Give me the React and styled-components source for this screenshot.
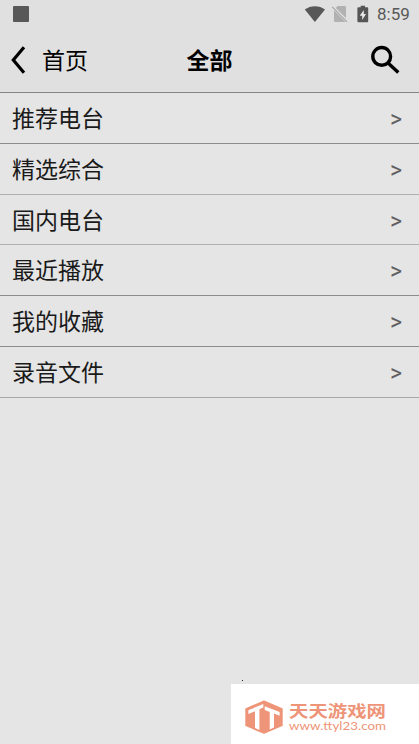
import React from "react";
import styled, { createGlobalStyle } from "styled-components";

const GlobalStyle = createGlobalStyle`
  * {
    box-sizing: border-box;
  }

  body {
    margin: 0;
    background-color: #e5e5e5;
    font-family: "Noto Sans CJK SC", sans-serif;
  }
`;

const categories = [
  { name: "推荐电台", height: 51, line: "#8c8c8c" },
  { name: "精选综合", height: 51, line: "#b0b0b0" },
  { name: "国内电台", height: 50, line: "#b0b0b0" },
  { name: "最近播放", height: 51, line: "#8c8c8c" },
  { name: "我的收藏", height: 51, line: "#8c8c8c" },
  { name: "录音文件", height: 51, line: "#a8a8a8" },
];

const WifiIcon = () => (
  <svg width="22" height="18" viewBox="0 0 22 18">
    <path d="M0.8 4.6C6.5 0.1 15.3 0.1 21 4.6L10.9 17z" fill="#585858" />
  </svg>
);

const NoSimIcon = () => (
  <svg width="18" height="18" viewBox="0 0 18 18">
    <path d="M6.7 1H13.6Q15 1 15 2.4V13.1L4.7 3z" fill="#b1b1b1" />
    <path d="M3 5.2L14.3 16.5Q14 17 13.3 17H4.2Q3 17 3 15.8z" fill="#b1b1b1" />
    <path d="M1.2 1.8L16 16.9" stroke="#a8a8a8" strokeWidth="1.2" />
  </svg>
);

const BatteryIcon = () => (
  <svg width="12" height="18" viewBox="0 0 12 18">
    <path d="M3.7 0.8H8V2.3H10.2Q11.2 2.3 11.2 3.3V16.2Q11.2 17.2 10.2 17.2H1.4Q0.4 17.2 0.4 16.2V3.3Q0.4 2.3 1.4 2.3H3.7z" fill="#555" />
    <path d="M6.8 5L2.7 10.7H5.2V15L9 9.1H6.8z" fill="#e8e8e8" />
  </svg>
);

const App = () => (
  <Screen>
    <GlobalStyle />
    <StatusBar>
      <AppSquare />
      <StatusIcons>
        <WifiIcon />
        <NoSimIcon />
        <BatteryIcon />
        <Clock>8:59</Clock>
      </StatusIcons>
    </StatusBar>

    <Toolbar>
      <BackButton>
        <svg width="16" height="28" viewBox="0 0 16 28">
          <path d="M14 1.2L3.3 14L14 26.8" fill="none" stroke="#000" strokeWidth="3.2" />
        </svg>
        <BackLabel>首页</BackLabel>
      </BackButton>
      <Title>全部</Title>
      <SearchButton aria-label="搜索">
        <svg width="32" height="32" viewBox="0 0 32 32">
          <circle cx="12.7" cy="12.4" r="8.9" fill="none" stroke="#000" strokeWidth="3.4" />
          <path d="M18.8 18.8L29.3 28.6" stroke="#000" strokeWidth="3.4" />
        </svg>
      </SearchButton>
    </Toolbar>

    <List>
      {categories.map((item) => (
        <Row key={item.name} $height={item.height} $line={item.line}>
          <RowName>{item.name}</RowName>
          <Arrow>&gt;</Arrow>
        </Row>
      ))}
    </List>

    <Dot />
    <Watermark>
      <svg width="188" height="60" viewBox="0 0 188 60">
        <path d="M33 17.2L51 24.8V41.4L33 49.2L15 41.4V24.8z" fill="#ee9478" stroke="#ee9478" strokeWidth="1.4" strokeLinejoin="round" />
        <g fill="#fff">
          <path d="M17.4 26.2L32.3 20V23.6L28.4 25.2V46L24 44.1V27.2L17.4 30z" />
          <path d="M33.7 22.2L48.6 28V31.8L43 29.6V43.6L38.7 45.4V28L33.7 26z" />
        </g>
        <BrandName x="58" y="33" textLength="97" lengthAdjust="spacingAndGlyphs">天天游戏网</BrandName>
        <BrandUrl x="58" y="46" textLength="97" lengthAdjust="spacingAndGlyphs">www.ttyl23.com</BrandUrl>
      </svg>
    </Watermark>
  </Screen>
);

const Screen = styled.div`
  position: relative;
  width: 419px;
  height: 744px;
  overflow: hidden;
  background-color: #e5e5e5;
`;

const StatusBar = styled.div`
  display: flex;
  align-items: center;
  justify-content: space-between;
  height: 28px;
  padding: 0 9px 0 13px;
  background-color: #e0e0e0;
`;

const AppSquare = styled.div`
  width: 16px;
  height: 16px;
  border-radius: 1px;
  background-color: #585858;
`;

const StatusIcons = styled.div`
  display: flex;
  align-items: center;

  svg + svg {
    margin-left: 5px;
  }

  svg:nth-child(3) {
    margin-left: 8px;
  }
`;

const Clock = styled.span`
  width: 33px;
  margin-left: 8px;
  padding-top: 1px;
  color: #585858;
  font-family: Roboto, sans-serif;
  font-size: 17px;
  line-height: 27px;
  white-space: nowrap;
`;

const Toolbar = styled.header`
  display: grid;
  grid-template-columns: 1fr auto 1fr;
  align-items: center;
  height: 65px;
  padding: 0 18px 0 10px;
  background-color: #e0e0e0;
  border-bottom: 1px solid #858585;
`;

const BackButton = styled.button`
  display: flex;
  align-items: center;
  gap: 16px;
  padding: 0;
  border: none;
  background: none;
  color: #000;
  font-family: inherit;
  font-size: 23px;
`;

const BackLabel = styled.span`
  padding-bottom: 2px;
  line-height: 34px;
`;

const Title = styled.h1`
  margin: 0 0 0 8px;
  padding-bottom: 2px;
  color: #000;
  font-size: 23px;
  font-weight: 700;
  line-height: 34px;
`;

const SearchButton = styled.button`
  display: flex;
  justify-self: end;
  padding: 0;
  border: none;
  background: none;
`;

const List = styled.div`
  display: flex;
  flex-direction: column;
`;

const Row = styled.div`
  display: flex;
  align-items: center;
  justify-content: space-between;
  height: ${({ $height }) => $height}px;
  padding: 0 17px 0 12px;
  border-bottom: 1px solid ${({ $line }) => $line};
`;

const RowName = styled.span`
  padding-bottom: 2px;
  color: #1a1a1a;
  font-size: 23px;
  line-height: 34px;
`;

const Arrow = styled.span`
  padding-top: 4px;
  color: #606060;
  font-family: Roboto, sans-serif;
  font-size: 23px;
  line-height: 34px;
`;

const Dot = styled.div`
  position: absolute;
  right: 176px;
  bottom: 63px;
  width: 1px;
  height: 1px;
  background-color: #222;
`;

const Watermark = styled.div`
  position: absolute;
  right: 0;
  bottom: 0;
  width: 188px;
  height: 60px;
  background-color: #fff;
`;

const BrandName = styled.text`
  fill: #ee9478;
  font-size: 16px;
  font-weight: 700;
`;

const BrandUrl = styled.text`
  fill: #ee9478;
  font-family: Lato, sans-serif;
  font-size: 11.3px;
`;

export default App;
